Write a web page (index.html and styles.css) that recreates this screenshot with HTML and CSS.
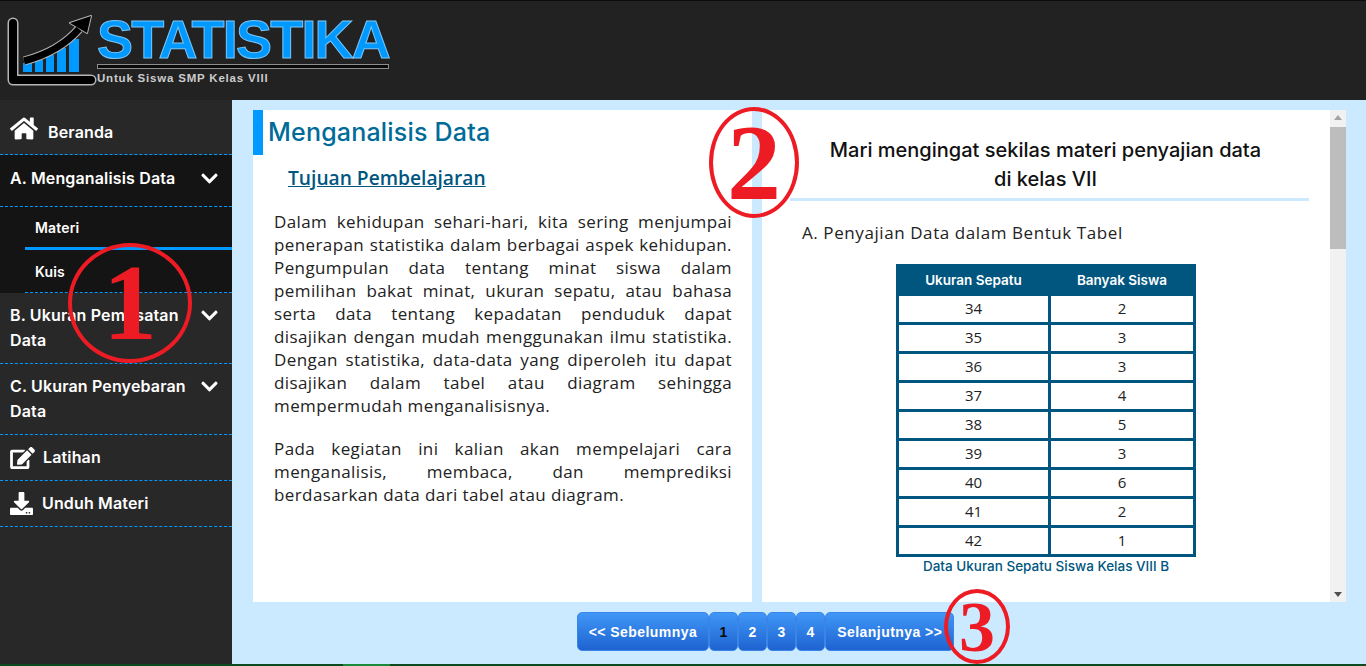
FILE: index.html
```html
<!DOCTYPE html>
<html lang="id">
<head>
    <meta charset="UTF-8">
    <meta name="viewport" content="width=device-width, initial-scale=1.0">
    <title>Statistika - Menganalisis Data</title>
    <link rel="stylesheet" href="styles.css">
</head>
<body>
    <header class="header">
        <svg class="logo-chart" viewBox="0 0 90 74" width="90" height="74">
            <path class="bars" d="M16 48h9v9h-9zM28 45h8v12h-8zM39 40h8v17h-8zM50 33h9v24h-9zM62 24h10v33h-10z"/>
            <path class="axis-edge" d="M6 8v57h78"/>
            <path class="axis" d="M6 8v57h78"/>
            <path class="arrow-edge" d="M17 46C40 40 58 30 72 14"/>
            <path class="arrow-edge-head" d="M63 8L84 1L80 18Z"/>
            <path class="arrow" d="M17 46C40 40 58 30 72 14"/>
            <path class="arrow-head" d="M63 8L84 1L80 18Z"/>
        </svg>
        <div class="logo-text">
            <div class="logo-title">STATISTIKA</div>
            <div class="logo-rule"></div>
            <div class="logo-sub">Untuk Siswa SMP Kelas VIII</div>
        </div>
    </header>

    <div class="page">
        <aside class="sidebar">
            <a class="nav-item nav-home">
                <svg class="ico ico-home" viewBox="0 0 576 512"><path d="M280.37 148.26L96 300.11V464a16 16 0 0 0 16 16l112.06-.29a16 16 0 0 0 15.92-16V368a16 16 0 0 1 16-16h64a16 16 0 0 1 16 16v95.64a16 16 0 0 0 16 16.05L464 480a16 16 0 0 0 16-16V300L295.67 148.26a12.19 12.19 0 0 0-15.3 0zM571.6 251.47L488 182.56V44.05a12 12 0 0 0-12-12h-56a12 12 0 0 0-12 12v72.61L318.47 43a48 48 0 0 0-61 0L4.34 251.47a12 12 0 0 0-1.6 16.9l25.5 31A12 12 0 0 0 45.15 301l235.22-193.74a12.19 12.19 0 0 1 15.3 0L530.9 301a12 12 0 0 0 16.9-1.6l25.5-31a12 12 0 0 0-1.7-16.93z"/></svg>
                Beranda
            </a>
            <div class="nav-open">
                <a class="nav-item nav-drop nav-a">
                    <span>A. Menganalisis Data</span>
                    <svg class="ico chev" viewBox="0 0 448 512"><path d="M207.029 381.476L12.686 187.132c-9.373-9.373-9.373-24.569 0-33.941l22.667-22.667c9.357-9.357 24.522-9.375 33.901-.04L224 284.505l154.745-154.021c9.379-9.335 24.544-9.317 33.901.04l22.667 22.667c9.373 9.373 9.373 24.569 0 33.941L240.971 381.476c-9.373 9.372-24.569 9.372-33.942 0z"/></svg>
                </a>
                <div class="submenu">
                    <a class="sub-item sub-active">Materi</a>
                    <a class="sub-item">Kuis</a>
                </div>
            </div>
            <a class="nav-item nav-drop">
                <span>B. Ukuran Pemusatan Data</span>
                <svg class="ico chev" viewBox="0 0 448 512"><path d="M207.029 381.476L12.686 187.132c-9.373-9.373-9.373-24.569 0-33.941l22.667-22.667c9.357-9.357 24.522-9.375 33.901-.04L224 284.505l154.745-154.021c9.379-9.335 24.544-9.317 33.901.04l22.667 22.667c9.373 9.373 9.373 24.569 0 33.941L240.971 381.476c-9.373 9.372-24.569 9.372-33.942 0z"/></svg>
            </a>
            <a class="nav-item nav-drop">
                <span>C. Ukuran Penyebaran Data</span>
                <svg class="ico chev" viewBox="0 0 448 512"><path d="M207.029 381.476L12.686 187.132c-9.373-9.373-9.373-24.569 0-33.941l22.667-22.667c9.357-9.357 24.522-9.375 33.901-.04L224 284.505l154.745-154.021c9.379-9.335 24.544-9.317 33.901.04l22.667 22.667c9.373 9.373 9.373 24.569 0 33.941L240.971 381.476c-9.373 9.372-24.569 9.372-33.942 0z"/></svg>
            </a>
            <a class="nav-item nav-icon">
                <svg class="ico ico-edit" viewBox="0 0 576 512"><path d="M402.6 83.2l90.2 90.2c3.8 3.8 3.8 10 0 13.8L274.4 405.6l-92.8 10.3c-12.4 1.4-22.9-9.1-21.5-21.5l10.3-92.8L388.8 83.2c3.8-3.8 10-3.8 13.8 0zm162-22.9l-48.8-48.8c-15.2-15.2-39.9-15.2-55.2 0l-35.4 35.4c-3.8 3.8-3.8 10 0 13.8l90.2 90.2c3.8 3.8 10 3.8 13.8 0l35.4-35.4c15.2-15.3 15.2-40 0-55.2zM384 346.2V448H64V128h229.8c3.2 0 6.2-1.3 8.5-3.5l40-40c7.6-7.6 2.2-20.5-8.5-20.5H48C21.5 64 0 85.5 0 112v352c0 26.5 21.5 48 48 48h352c26.5 0 48-21.5 48-48V306.2c0-10.7-12.9-16-20.5-8.5l-40 40c-2.2 2.3-3.5 5.3-3.5 8.5z"/></svg>
                Latihan
            </a>
            <a class="nav-item nav-icon">
                <svg class="ico ico-down" viewBox="0 0 512 512"><path d="M216 0h80c13.3 0 24 10.7 24 24v168h87.7c17.8 0 26.7 21.5 14.1 34.1L269.7 378.3c-7.5 7.5-19.8 7.5-27.3 0L90.1 226.1c-12.6-12.6-3.7-34.1 14.1-34.1H192V24c0-13.3 10.7-24 24-24zm296 376v112c0 13.3-10.7 24-24 24H24c-13.3 0-24-10.7-24-24V376c0-13.3 10.7-24 24-24h146.7l49 49c20.1 20.1 52.5 20.1 72.6 0l49-49H488c13.3 0 24 10.7 24 24zm-124 88c0-11-9-20-20-20s-20 9-20 20 9 20 20 20 20-9 20-20zm64 0c0-11-9-20-20-20s-20 9-20 20 9 20 20 20 20-9 20-20z"/></svg>
                Unduh Materi
            </a>
        </aside>

        <main class="main">
            <div class="panels">
                <section class="panel-left">
                    <h1 class="title">Menganalisis Data</h1>
                    <h2 class="subtitle">Tujuan Pembelajaran</h2>
                    <p class="para">Dalam kehidupan sehari-hari, kita sering menjumpai penerapan statistika dalam berbagai aspek kehidupan. Pengumpulan data tentang minat siswa dalam pemilihan bakat minat, ukuran sepatu, atau bahasa serta data tentang kepadatan penduduk dapat disajikan dengan mudah menggunakan ilmu statistika. Dengan statistika, data-data yang diperoleh itu dapat disajikan dalam tabel atau diagram sehingga mempermudah menganalisisnya.</p>
                    <p class="para">Pada kegiatan ini kalian akan mempelajari cara menganalisis, membaca, dan memprediksi berdasarkan data dari tabel atau diagram.</p>
                </section>
                <section class="panel-right">
                    <div class="right-content">
                        <h3 class="right-head">Mari mengingat sekilas materi penyajian data<br>di kelas VII</h3>
                        <p class="right-sub">A. Penyajian Data dalam Bentuk Tabel</p>
                        <table class="shoes">
                            <thead>
                                <tr><th>Ukuran Sepatu</th><th>Banyak Siswa</th></tr>
                            </thead>
                            <tbody>
                                <tr><td>34</td><td>2</td></tr>
                                <tr><td>35</td><td>3</td></tr>
                                <tr><td>36</td><td>3</td></tr>
                                <tr><td>37</td><td>4</td></tr>
                                <tr><td>38</td><td>5</td></tr>
                                <tr><td>39</td><td>3</td></tr>
                                <tr><td>40</td><td>6</td></tr>
                                <tr><td>41</td><td>2</td></tr>
                                <tr><td>42</td><td>1</td></tr>
                            </tbody>
                        </table>
                        <p class="caption">Data Ukuran Sepatu Siswa Kelas VIII B</p>
                    </div>
                    <div class="scrollbar">
                        <span class="arrow-up"></span>
                        <span class="thumb"></span>
                        <span class="arrow-down"></span>
                    </div>
                </section>
            </div>
            <nav class="pager">
                <a class="pg pg-wide">&lt;&lt; Sebelumnya</a>
                <a class="pg pg-current">1</a>
                <a class="pg">2</a>
                <a class="pg">3</a>
                <a class="pg">4</a>
                <a class="pg pg-wide">Selanjutnya &gt;&gt;</a>
            </nav>
        </main>
    </div>
    <div class="strip"><span class="strip-on"></span></div>

    <!-- red marks drawn over the page -->
    <span class="mark mark-1">1</span>
    <span class="mark mark-2">2</span>
    <span class="mark mark-3">3</span>
</body>
</html>
```

FILE: styles.css
```css
* {
    margin: 0;
    padding: 0;
    box-sizing: border-box;
}
body {
    font-family: 'Open Sans', sans-serif;
    background: #cceaff;
    display: flex;
    flex-direction: column;
    height: 100vh;
    overflow: hidden;
    position: relative;
}

/* header */
.header {
    height: 100px;
    flex: none;
    background: #222;
    border-top: 1px solid #0c0c10;
    display: flex;
    padding: 14px 0 0 7px;
}
.logo-chart {
    flex: none;
}
.logo-chart path {
    fill: none;
}
.logo-chart .bars {
    fill: #0099ff;
}
.logo-chart .axis-edge {
    stroke: #b5b5b5;
    stroke-width: 11;
    stroke-linecap: round;
    stroke-linejoin: round;
}
.logo-chart .axis {
    stroke: #000;
    stroke-width: 8;
    stroke-linecap: round;
    stroke-linejoin: round;
}
.logo-chart .arrow-edge {
    stroke: #b5b5b5;
    stroke-width: 9;
}
.logo-chart .arrow {
    stroke: #000;
    stroke-width: 7;
}
.logo-chart .arrow-edge-head {
    fill: #000;
    stroke: #b5b5b5;
    stroke-width: 2;
    stroke-linejoin: round;
}
.logo-chart .arrow-head {
    fill: #000;
}
.logo-text {
    width: 292px;
}
.logo-title {
    font-family: 'Liberation Sans', sans-serif;
    font-weight: bold;
    font-size: 54px;
    line-height: 49px;
    letter-spacing: -1.8px;
    color: #0099ff;
    -webkit-text-stroke: 1px #7cc4f5;
    white-space: nowrap;
}
.logo-rule {
    height: 5px;
    background: #0a0a0a;
    border: 1px solid #8d8d8d;
}
.logo-sub {
    font-family: 'Liberation Sans', sans-serif;
    font-weight: bold;
    font-size: 11.5px;
    letter-spacing: 0.8px;
    color: #ccc;
    margin-top: 3px;
}

.page {
    flex: 1;
    display: flex;
    min-height: 0;
}

/* sidebar */
.sidebar {
    width: 232px;
    flex: none;
    background: #282828;
    color: #fff;
    font-family: Inter, sans-serif;
    font-weight: 600;
    font-size: 16px;
    line-height: 25px;
    letter-spacing: 0.15px;
}
.nav-item {
    display: flex;
    align-items: center;
    padding: 10px;
    border-bottom: 1px dashed #0099ff;
}
.nav-home {
    height: 55px;
    padding-top: 20px;
}
.nav-icon {
    height: 46px;
}
.nav-drop {
    align-items: flex-start;
    justify-content: space-between;
    padding-right: 14px;
}
.nav-drop span {
    width: 180px;
}
.nav-a {
    height: 52px;
    padding-top: 11px;
}
.nav-open {
    background: #141414;
}
.ico {
    fill: #fff;
    flex: none;
}
.ico-home {
    width: 28px;
    height: 25px;
    margin: -7px 10px 0 0;
}
.ico-edit {
    width: 25px;
    height: 22px;
    margin-right: 8px;
}
.ico-down {
    width: 23px;
    height: 23px;
    margin-right: 9px;
}
.chev {
    width: 17px;
    height: 19px;
    margin-top: 3px;
}
.submenu {
    margin-left: 25px;
    font-size: 14px;
}
.sub-item {
    display: flex;
    align-items: center;
    height: 43px;
    padding-left: 10px;
    border-bottom: 1px dashed #0099ff;
}
.sub-active {
    border-bottom: 3px solid #0099ff;
}

/* main area */
.main {
    flex: 1;
    min-width: 0;
    padding: 10px 20px 0 21px;
    display: flex;
    flex-direction: column;
}
.panels {
    height: 492px;
    display: flex;
    gap: 10px;
}
.panel-left {
    width: 499px;
    background: #fff;
    padding-right: 20px;
}
.title {
    font-family: Inter, sans-serif;
    font-weight: 500;
    font-size: 25px;
    line-height: 45px;
    letter-spacing: 0.2px;
    color: #006b99;
    border-left: 10px solid #0099ff;
    padding-left: 5px;
}
.subtitle {
    font-family: 'Open Sans', sans-serif;
    font-weight: 600;
    font-size: 19.2px;
    line-height: 28px;
    color: #00567f;
    text-decoration: underline;
    padding: 9px 0 0 35px;
}
.para {
    font-size: 17px;
    line-height: 23px;
    letter-spacing: 0.4px;
    color: #222;
    text-align: justify;
    margin: 20px 0 20px 21px;
}
.subtitle + .para {
    margin-top: 18px;
}
.panel-right {
    flex: 1;
    background: #fff;
    display: flex;
    overflow: hidden;
}
.right-content {
    flex: 1;
    min-width: 0;
    padding: 0 21px 0 28px;
}
.right-head {
    font-family: Inter, sans-serif;
    font-weight: 500;
    font-size: 20px;
    line-height: 29px;
    color: #111;
    text-align: center;
    padding: 26px 8px 4px 0;
    border-bottom: 3px solid #cceaff;
}
.right-sub {
    font-size: 17px;
    letter-spacing: 0.58px;
    line-height: 24px;
    color: #222;
    margin: 20px 0 19px 12px;
}
.shoes {
    border-collapse: collapse;
    width: 300px;
    margin-left: 106px;
    table-layout: fixed;
    border: 3px solid #00567f;
}
.shoes th {
    background: #00567f;
    color: #fff;
    font-family: Inter, sans-serif;
    font-weight: 600;
    font-size: 13.5px;
    height: 29px;
    border: 3px solid #00567f;
}
.shoes th:first-child {
    width: 152px;
}
.shoes td {
    text-align: center;
    font-size: 15px;
    color: #222;
    height: 29px;
    padding-bottom: 2px;
    border: 3px solid #00567f;
}
.caption {
    font-family: Inter, sans-serif;
    font-weight: 500;
    font-size: 13.5px;
    line-height: 18px;
    color: #00567f;
    text-align: center;
    width: 300px;
    margin-left: 106px;
}
.scrollbar {
    width: 16px;
    flex: none;
    background: #f1f1f1;
    display: flex;
    flex-direction: column;
    align-items: center;
    padding: 5px 0;
}
.thumb {
    width: 100%;
    height: 122px;
    background: #bdbdbd;
    margin-top: 7px;
}
.arrow-up,
.arrow-down {
    width: 0;
    height: 0;
    border-left: 4px solid transparent;
    border-right: 4px solid transparent;
}
.arrow-up {
    border-bottom: 5px solid #a3a3a3;
}
.arrow-down {
    border-top: 5px solid #505050;
    margin-top: auto;
}

/* pagination */
.pager {
    display: flex;
    justify-content: center;
    margin-top: 10px;
    padding-right: 68px;
}
.pg {
    height: 39px;
    min-width: 29px;
    padding: 0 9px;
    display: flex;
    align-items: center;
    justify-content: center;
    font-family: 'Liberation Sans', sans-serif;
    font-weight: bold;
    font-size: 14px;
    letter-spacing: 0.45px;
    color: #fff;
    background: linear-gradient(#4097f7, #1e63d0);
    border: 1px solid #3a86e8;
    border-radius: 5px;
}
.pg-wide {
    padding: 0 11px;
}
.pg-current {
    color: #0a0a0a;
}

/* strip at the bottom edge */
.strip {
    position: absolute;
    left: 0;
    right: 0;
    bottom: 0;
    height: 2px;
    background: #0c4a1e;
}
.strip-on {
    display: block;
    width: 47px;
    height: 2px;
    margin-left: 343px;
    background: #1a8a3a;
}

/* red hand-drawn numbers */
.mark {
    position: absolute;
    display: flex;
    align-items: center;
    justify-content: center;
    border: 4px solid #ed1c24;
    border-radius: 50%;
    color: #ed1c24;
    font-family: 'Liberation Serif', serif;
    font-weight: bold;
    font-size: 108px;
    line-height: 1;
}
.mark-1 {
    left: 68px;
    top: 243px;
    width: 124px;
    height: 120px;
}
.mark-2 {
    left: 709px;
    top: 107px;
    width: 90px;
    height: 111px;
}
.mark-3 {
    left: 944px;
    top: 589px;
    width: 66px;
    height: 75px;
    font-size: 72px;
}
```
